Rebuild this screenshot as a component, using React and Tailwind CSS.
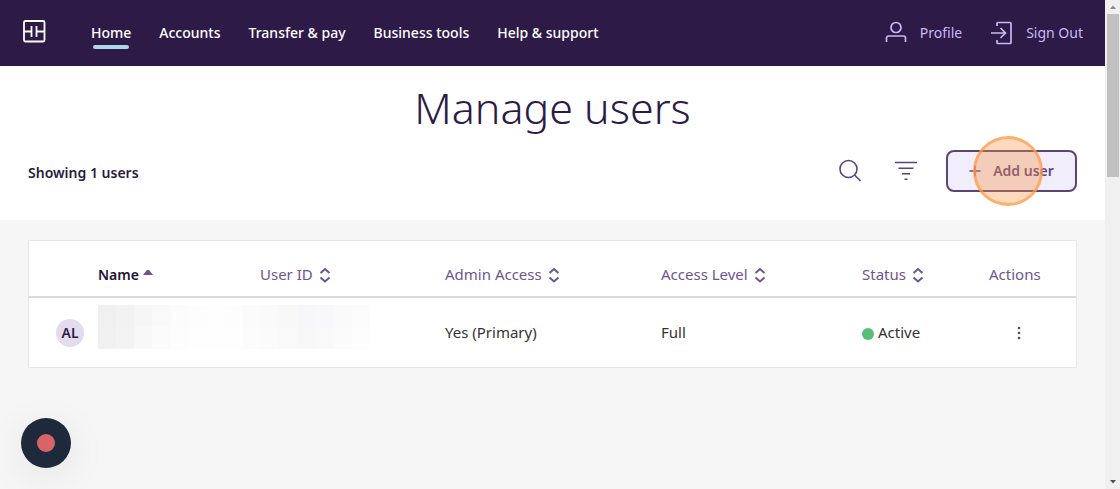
import React, { useState } from "react";

const navLinks = ["Home", "Accounts", "Transfer & pay", "Business tools", "Help & support"];

const users = [
  { initials: "AL", admin: "Yes (Primary)", level: "Full", status: "Active" },
];

// greyed out name and user id
const redactedTop = [
  "bg-[#f0f0f0]", "bg-[#f2f2f2]", "bg-[#f6f6f6]", "bg-[#f9f9f9]", "bg-[#fcfcfc]", "bg-[#fdfdfd]",
  "bg-[#fefefe]", "bg-[#fdfdfd]", "bg-[#fbfbfb]", "bg-[#fafafb]", "bg-[#f8f8f9]", "bg-[#f7f7f9]",
  "bg-[#f8f8fa]", "bg-[#fafafb]", "bg-[#fcfcfd]",
];
const redactedBottom = [
  "bg-[#f1f1f1]", "bg-[#f3f3f3]", "bg-[#f8f8f8]", "bg-[#fbfbfb]", "bg-[#fdfdfd]", "bg-[#fefefe]",
  "bg-[#fefefe]", "bg-[#fefefe]", "bg-[#fcfcfc]", "bg-[#fbfbfb]", "bg-[#f9f9fa]", "bg-[#f8f8f9]",
  "bg-[#f9f9fa]", "bg-[#fbfbfb]", "bg-[#fdfdfd]",
];

const Logo = () => (
  <svg className="size-6" viewBox="0 0 24 24" fill="none" stroke="currentColor" strokeWidth="1.8">
    <rect x="2" y="2" width="20.500" height="20.500" rx="1.500" />
    <path d="M2 12.500h7.500M9.500 7v11M14.500 12.500h8M14.500 7v11" />
  </svg>
);

const ProfileIcon = () => (
  <svg className="size-6" viewBox="0 0 24 24" fill="none" stroke="currentColor" strokeWidth="1.7">
    <circle cx="12" cy="6.500" r="5" />
    <path d="M2.500 21v-4a2 2 0 0 1 2-2h15a2 2 0 0 1 2 2v4" />
  </svg>
);

const SignOutIcon = () => (
  <svg className="size-6" viewBox="0 0 24 24" fill="none" stroke="currentColor" strokeWidth="1.7">
    <path d="M7 5V2.500q0-1 1-1h12q1 0 1 1v19q0 1-1 1H8q-1 0-1-1V19M1 12h14.500M10.500 7l5 5-5 5" />
  </svg>
);

const SearchIcon = () => (
  <svg className="size-6" viewBox="0 0 24 24" fill="none" stroke="currentColor" strokeWidth="1.600">
    <circle cx="10.500" cy="10" r="8.500" />
    <path d="M16.500 16l6 6" />
  </svg>
);

const FilterIcon = () => (
  <svg className="size-6" viewBox="0 0 24 24" fill="none" stroke="currentColor" strokeWidth="1.600">
    <path d="M1 3.500h22M4.500 9.200h15M8 14.800h8M10.500 20.200h3" />
  </svg>
);

const SortIcon = () => (
  <svg className="h-4 w-3" viewBox="0 0 12 16" fill="none" stroke="currentColor" strokeWidth="2">
    <path d="M1.500 6L6 2l4.500 4M1.500 10.500L6 14.500l4.500-4" />
  </svg>
);

const SortHeader = ({ label }) => (
  <th scope="col" className="p-0 pt-3 text-left font-normal">
    <button type="button" className="flex items-center gap-1.5">
      {label}
      <SortIcon />
    </button>
  </th>
);

const Header = () => {
  const [active, setActive] = useState("Home");

  return (
    <header className="flex h-[66px] items-center justify-between bg-[#2e1a47] px-[22px]">
      <div className="flex items-center gap-[45px]">
        <a href="#" aria-label="Dashboard" className="-mt-1 text-white">
          <Logo />
        </a>
        <nav className="flex items-center gap-7 text-sm font-medium text-white">
          {navLinks.map((link) => (
            <a key={link} href="#" className="relative" onClick={() => setActive(link)}>
              {link}
              {active === link && (
                <span className="absolute inset-x-0.5 -bottom-1.5 h-1 rounded-full bg-[#acd8e6]"></span>
              )}
            </a>
          ))}
        </nav>
      </div>
      <div className="flex items-center gap-7 text-sm text-[#c9b8f5]">
        <a href="#" className="flex items-center gap-3">
          <ProfileIcon />
          Profile
        </a>
        <a href="#" className="flex items-center gap-3">
          <SignOutIcon />
          Sign Out
        </a>
      </div>
    </header>
  );
};

const Toolbar = () => (
  <section className="bg-white px-7 pt-4 pb-7">
    <h1 className="text-center text-[43px] leading-[52px] font-light text-[#2e1a47]">Manage users</h1>
    <div className="mt-4 flex items-center justify-between">
      <p className="pt-1 text-sm font-semibold text-[#2a1c3d]">Showing 1 users</p>
      <div className="flex items-center gap-8 text-[#5c4380]">
        <button type="button" aria-label="Search">
          <SearchIcon />
        </button>
        <button type="button" aria-label="Filter">
          <FilterIcon />
        </button>
        <button
          type="button"
          className="relative -ml-1 flex h-[42px] w-[131px] items-center justify-center gap-3 rounded-lg border-2 border-[#5a4576] bg-[#f1edfa] text-sm font-semibold"
        >
          <svg className="size-3" viewBox="0 0 12 12" stroke="currentColor" strokeWidth="1.700">
            <path d="M0.500 6h11M6 0.500v11" />
          </svg>
          Add user
          <span className="absolute -top-4 left-[25px] size-[70px] rounded-full border-[3px] border-[#fc9c4c]/70 bg-[#f99242]/35"></span>
        </button>
      </div>
    </div>
  </section>
);

const UserTable = () => (
  <div className="border border-[#e6e6e6] bg-white">
    <table className="w-full table-fixed border-collapse text-[15px]">
      <colgroup>
        <col className="w-[69px]" />
        <col className="w-[162px]" />
        <col className="w-[185px]" />
        <col className="w-[216px]" />
        <col className="w-[201px]" />
        <col className="w-[127px]" />
        <col className="w-[87px]" />
      </colgroup>
      <thead>
        <tr className="h-[56px] border-b-2 border-[#dadada] text-[#6d568f]">
          <td></td>
          <th scope="col" className="p-0 pt-3 text-left text-sm font-semibold text-[#231535]">
            <button type="button" className="flex gap-1">
              Name
              <svg className="mt-1 h-2 w-2.5 text-[#6d568f]" viewBox="0 0 10 8" fill="currentColor">
                <path d="M0 6l3.500-4.500q1.500-1.500 3 0L10 6z" />
              </svg>
            </button>
          </th>
          {["User ID", "Admin Access", "Access Level", "Status"].map((label) => (
            <SortHeader key={label} label={label} />
          ))}
          <th scope="col" className="p-0 pt-3 text-left font-normal">Actions</th>
        </tr>
      </thead>
      <tbody>
        {users.map((user) => (
          <tr key={user.initials} className="h-[70px] text-[#333333]">
            <td className="p-0 pl-[27px]">
              <div className="flex size-7 items-center justify-center rounded-full bg-[#e2dcee] text-sm font-semibold text-[#2e1a47]">
                {user.initials}
              </div>
            </td>
            <td colSpan={2} className="p-0 pb-3">
              <div className="w-[272px]">
                <div className="flex">
                  {redactedTop.map((shade, index) => (
                    <div key={index} className={`h-[22px] flex-1 ${shade}`}></div>
                  ))}
                </div>
                <div className="flex">
                  {redactedBottom.map((shade, index) => (
                    <div key={index} className={`h-[22px] flex-1 ${shade}`}></div>
                  ))}
                </div>
              </div>
            </td>
            <td className="p-0">{user.admin}</td>
            <td className="p-0">{user.level}</td>
            <td className="p-0">
              <span className="flex items-center gap-1">
                <span className="mt-0.5 size-3 rounded-full bg-[#57bd79]"></span>
                {user.status}
              </span>
            </td>
            <td className="p-0 pl-6">
              <button type="button" aria-label="User actions" className="block text-[#5c4380]">
                <svg className="h-4 w-3" viewBox="0 0 12 16" fill="currentColor">
                  <circle cx="6" cy="3" r="1.300" />
                  <circle cx="6" cy="8" r="1.300" />
                  <circle cx="6" cy="13" r="1.300" />
                </svg>
              </button>
            </td>
          </tr>
        ))}
      </tbody>
    </table>
  </div>
);

const ScrollTrack = () => (
  <div className="flex w-[15px] flex-col items-center bg-[#f0f0f0]">
    <svg className="h-3.5 w-3 shrink-0" viewBox="0 0 12 14" fill="#8a8a8a">
      <path d="M3 9l3-3.500L9 9z" />
    </svg>
    <div className="h-[163px] w-3 bg-[#c1c1c1]"></div>
    <svg className="mt-auto h-3.5 w-3 shrink-0" viewBox="0 0 12 14" fill="#505050">
      <path d="M3 5l3 3.500L9 5z" />
    </svg>
  </div>
);

const App = () => {
  return (
    <div className="flex min-h-screen bg-[#f6f6f6] font-['Noto_Sans',sans-serif]">
      <div className="min-w-0 flex-1">
        <Header />
        <main>
          <Toolbar />
          <section className="px-7 pt-5">
            <UserTable />
          </section>
        </main>
      </div>
      <ScrollTrack />
      <button
        type="button"
        aria-label="Record"
        className="fixed bottom-[21px] left-[21px] flex size-[50px] items-center justify-center rounded-full bg-[#1e293b] shadow-[0_8px_40px_rgba(0,0,0,0.08)]"
      >
        <span className="size-[18px] rounded-full bg-[#d96468]"></span>
      </button>
    </div>
  );
};

export default App;
